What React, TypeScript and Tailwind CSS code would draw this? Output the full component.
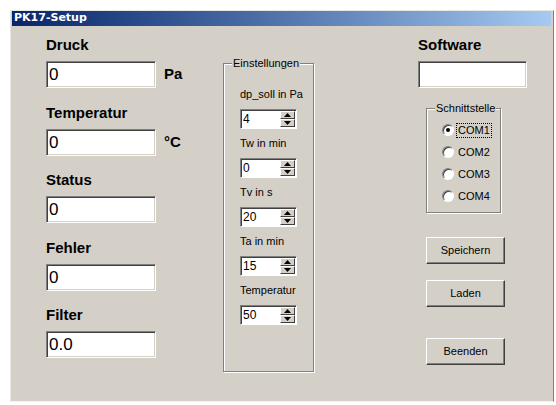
const ui = "font-['Liberation_Sans',Arial,sans-serif]";

function Field({ value, width = "w-[110px]" }: { value: string; width?: string }) {
    return (
        <div
            className={`${width} h-[27px] bg-white border border-t-[#808080] border-l-[#808080] border-r-[#ffffff] border-b-[#ffffff] shadow-[inset_1px_1px_0_#404040,inset_-1px_-1px_0_#d4d0c8] flex items-center pl-[2px] text-[17px] leading-none text-black`}
        >
            {value}
        </div>
    );
}

function Label({ text }: { text: string }) {
    return <div className="h-[18px] text-[15px] font-bold leading-[18px] text-black">{text}</div>;
}

function Spinner({ value }: { value: string }) {
    return (
        <div className="flex h-[20px] w-[57px] bg-white border border-t-[#808080] border-l-[#808080] border-r-[#ffffff] border-b-[#ffffff] shadow-[inset_1px_1px_0_#404040]">
            <div className="flex-1 pl-[2px] pt-[1px] text-[12px] leading-[16px] text-black">{value}</div>
            <div className="flex w-[15px] flex-col mt-[1px] mb-[1px] mr-[1px]">
                {["up", "down"].map((dir) => (
                    <div
                        key={dir}
                        className="flex flex-1 items-center justify-center bg-[#d4d0c8] border border-t-white border-l-white border-r-[#404040] border-b-[#404040]"
                    >
                        <svg width="7" height="4" viewBox="0 0 7 4">
                            {dir === "up" ? (
                                <path d="M3.5 0 L7 4 L0 4 Z" fill="#000" />
                            ) : (
                                <path d="M0 0 L7 0 L3.5 4 Z" fill="#000" />
                            )}
                        </svg>
                    </div>
                ))}
            </div>
        </div>
    );
}

function Button({ text }: { text: string }) {
    return (
        <div className="flex h-[27px] w-[79px] items-center justify-center bg-[#d4d0c8] border border-t-white border-l-white border-r-[#404040] border-b-[#404040] shadow-[inset_-1px_-1px_0_#808080] text-[11px] text-black">
            {text}
        </div>
    );
}

function Radio({ label, checked }: { label: string; checked?: boolean }) {
    return (
        <div className="flex h-[22px] items-center">
            <div className="ml-[15px] flex h-[12px] w-[12px] items-center justify-center rounded-full bg-white border border-t-[#808080] border-l-[#808080] border-r-white border-b-white shadow-[inset_1px_1px_0_#404040]">
                {checked && <div className="h-[4px] w-[4px] rounded-full bg-black" />}
            </div>
            <div
                className={`ml-[2px] px-[1px] text-[11px] leading-[13px] text-black border border-dotted ${
                    checked ? "border-black" : "border-transparent"
                }`}
            >
                {label}
            </div>
        </div>
    );
}

function GroupBox({
    caption,
    className,
    children,
}: {
    caption: string;
    className: string;
    children: React.ReactNode;
}) {
    return (
        <div className={`relative border border-[#808080] shadow-[1px_1px_0_#ffffff,inset_1px_1px_0_#ffffff] ${className}`}>
            <div className="absolute -top-[7px] left-[8px] bg-[#d4d0c8] px-[1px] text-[11px] leading-[13px] text-black">
                {caption}
            </div>
            {children}
        </div>
    );
}

const settings = [
    { label: "dp_soll in Pa", value: "4" },
    { label: "Tw in min", value: "0" },
    { label: "Tv in s", value: "20" },
    { label: "Ta in min", value: "15" },
    { label: "Temperatur", value: "50" },
];

const readings = [
    { label: "Druck", value: "0", unit: "Pa" },
    { label: "Temperatur", value: "0", unit: "°C" },
    { label: "Status", value: "0" },
    { label: "Fehler", value: "0" },
    { label: "Filter", value: "0.0" },
];

export default function App() {
    return (
        <div className={`min-h-screen bg-white pl-[10px] pt-[10px] ${ui}`}>
            <div className="flex h-[392px] w-[544px] flex-col bg-[#d4d0c8] border border-t-[#e8e6e0] border-l-[#e8e6e0] border-r-[#808080] border-b-[#f4f3ef]">
                <div className="ml-[1px] mr-[2px] flex h-[15px] items-center bg-gradient-to-r from-[#0a246a] to-[#a6caf0] pl-[2px] font-['DejaVu_Sans',sans-serif] text-[11px] font-bold text-white">
                    PK17-Setup
                </div>

                <div className="flex">
                    {/* Messwerte */}
                    <div className="w-[212px] pl-[35px] pt-[10px]">
                        {readings.map((r) => (
                            <div key={r.label} className="h-[67.5px]">
                                <Label text={r.label} />
                                <div className="mt-[7px] flex items-center">
                                    <Field value={r.value} />
                                    {r.unit && <span className="ml-[8px] text-[15px] font-bold">{r.unit}</span>}
                                </div>
                            </div>
                        ))}
                    </div>

                    {/* Einstellungen */}
                    <GroupBox caption="Einstellungen" className="mt-[37px] h-[309px] w-[91px] pl-[16px] pt-[23px]">
                        {settings.map((s) => (
                            <div key={s.label} className="h-[49px]">
                                <div className="h-[14px] text-[11px] leading-[14px] text-black">{s.label}</div>
                                <div className="mt-[8px]">
                                    <Spinner value={s.value} />
                                </div>
                            </div>
                        ))}
                    </GroupBox>

                    {/* Software / Schnittstelle / Aktionen */}
                    <div className="ml-[104px] pt-[10px]">
                        <Label text="Software" />
                        <div className="mt-[7px]">
                            <Field value="" width="w-[109px]" />
                        </div>
                        <GroupBox caption="Schnittstelle" className="ml-[8px] mt-[20px] h-[105px] w-[75px] pt-[10px]">
                            <Radio label="COM1" checked />
                            <Radio label="COM2" />
                            <Radio label="COM3" />
                            <Radio label="COM4" />
                        </GroupBox>
                        <div className="ml-[8px] mt-[24px] flex flex-col">
                            <Button text="Speichern" />
                            <div className="mt-[16px]">
                                <Button text="Laden" />
                            </div>
                            <div className="mt-[31px]">
                                <Button text="Beenden" />
                            </div>
                        </div>
                    </div>
                </div>
            </div>
        </div>
    );
}
